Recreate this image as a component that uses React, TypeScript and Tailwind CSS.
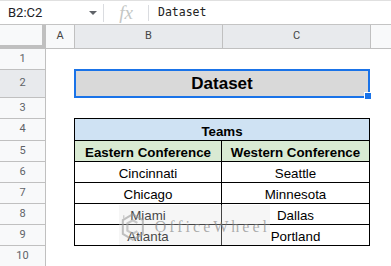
import React from "react";

type RowProps = {
  n: number;
  h: string;
  active?: boolean;
  children?: React.ReactNode;
};

// one sheet row: number gutter, column A, then the B:C area
const Row = ({ n, h, active, children }: RowProps) => {
  return (
    <div className={`flex items-start ${h}`}>
      <div
        className={`w-[46px] h-full shrink-0 flex items-center justify-center border-r border-b border-[#c0c0c0] text-[11px] text-[#5f6368] ${
          active ? "bg-[#e8eaed]" : "bg-[#f8f9fa]"
        }`}
      >
        {n}
      </div>
      <div className="w-[28px] h-full shrink-0" />
      <div className="w-[296px] h-full shrink-0 flex">{children}</div>
      <div className="flex-1 h-full" />
    </div>
  );
};

const Cell = ({
  text,
  first,
  bold,
  bg,
}: {
  text: string;
  first?: boolean;
  bold?: boolean;
  bg?: string;
}) => (
  <div
    className={`w-[148px] h-full flex items-end justify-center border-r border-b border-black leading-[16px] text-[13.33px] text-black ${
      first ? "border-l" : ""
    } ${bold ? "font-bold" : ""} ${bg ?? "bg-white"}`}
  >
    {text}
  </div>
);

const teams = [
  ["Cincinnati", "Seattle"],
  ["Chicago", "Minnesota"],
  ["Miami", "Dallas"],
  ["Atlanta", "Portland"],
];

const App = () => {
  return (
    <div className="relative w-[391px] h-[266px] overflow-hidden bg-white font-['Roboto',sans-serif]">
      {/* formula bar */}
      <div className="h-[25px] flex items-center border-t border-b border-t-[#e0e0e0] border-b-[#c4c4c4] bg-white">
        <div className="w-[103px] shrink-0 flex items-center justify-between pl-[8px] pr-[6px]">
          <span className="text-[13px] text-[#202124] leading-none">B2:C2</span>
          <svg width="8" height="4" viewBox="0 0 8 4">
            <path d="M0 0h8L4 4z" fill="#5f6368" />
          </svg>
        </div>
        <div className="w-px h-[18px] bg-[#dadce0]" />
        <div className="w-[44px] shrink-0 flex items-center justify-center">
          <span className="font-['Liberation_Serif',serif] italic text-[19px] leading-none text-[#c4c7c5]">
            fx
          </span>
        </div>
        <div className="w-px h-[16px] bg-[#dadce0]" />
        <span className="pl-[9px] font-['DejaVu_Sans_Mono',monospace] text-[11.5px] text-[#222] leading-none">
          Dataset
        </span>
      </div>

      {/* column letters */}
      <div className="h-[24px] flex text-[11px] text-[#444]">
        <div className="w-[46px] shrink-0 bg-[#f8f9fa] border-r-4 border-b-4 border-[#c0c0c0]" />
        <div className="w-[29px] shrink-0 flex items-center justify-center bg-[#f8f9fa] border-r border-b border-[#c0c0c0]">
          A
        </div>
        <div className="w-[148px] shrink-0 flex items-center justify-center bg-[#e8eaed] border-r border-b border-[#c0c0c0]">
          B
        </div>
        <div className="w-[148px] shrink-0 flex items-center justify-center bg-[#e8eaed] border-r border-b border-[#c0c0c0]">
          C
        </div>
        <div className="flex-1 bg-[#f8f9fa] border-b border-[#c0c0c0]" />
      </div>

      <Row n={1} h="h-[21px]" />
      <Row n={2} h="h-[28px]" active>
        <div className="relative w-[297px] h-[29px] -mt-px flex items-center justify-center border-2 border-[#1a73e8] bg-[#d9d9d9] font-['Liberation_Sans',Arial,sans-serif] font-bold text-[17px] text-black">
          <span className="pt-[1px]">Dataset</span>
          <div className="absolute -right-[4px] -bottom-[4px] w-[8px] h-[8px] bg-[#1a73e8] border border-white" />
        </div>
      </Row>
      <Row n={3} h="h-[21px]">
        <div className="w-[296px] h-full border-b border-black" />
      </Row>
      <Row n={4} h="h-[22px]">
        <div className="w-[296px] h-full flex items-end justify-center border-l border-r border-b border-black bg-[#cfe2f3] font-['Liberation_Sans',Arial,sans-serif] font-bold text-[13.33px] leading-[16px] text-black">
          Teams
        </div>
      </Row>
      <Row n={5} h="h-[21px]">
        <div className="flex h-full font-['Liberation_Sans',Arial,sans-serif]">
          <Cell text="Eastern Conference" first bold bg="bg-[#d9ead3]" />
          <Cell text="Western Conference" bold bg="bg-[#d9ead3]" />
        </div>
      </Row>
      {teams.map(([east, west], i) => (
        <Row key={east} n={6 + i} h="h-[21px]">
          <div className="flex h-full font-['Liberation_Sans',Arial,sans-serif]">
            <Cell text={east} first />
            <Cell text={west} />
          </div>
        </Row>
      ))}
      <Row n={10} h="h-[21px]" />

      {/* site watermark */}
      <div className="absolute left-[119px] top-[205px] w-[151px] h-[40px] flex items-center gap-[10px] pl-[2px] pt-[3px] bg-[rgba(225,225,225,0.3)] pointer-events-none">
        <svg width="26" height="32" viewBox="0 0 26 32" className="opacity-60">
          <path d="M13 2 L24 8.5 V23.5 L13 30 L2 23.5 V8.5 Z" fill="none" stroke="#9a9a9a" strokeWidth="2.2" />
          <path d="M18 11.5 L13 8.7 L7 12 V20 L13 23.3 L18 20.5" fill="none" stroke="#a8a8a8" strokeWidth="2.4" />
          <path d="M3 3 V7" stroke="#b0b0b0" strokeWidth="1.5" />
        </svg>
        <span className="font-['Liberation_Serif',serif] text-[16px] tracking-[3px] text-[rgba(130,130,130,0.65)] leading-none">
          OfficeWheel
        </span>
      </div>
    </div>
  );
};

export default App;
